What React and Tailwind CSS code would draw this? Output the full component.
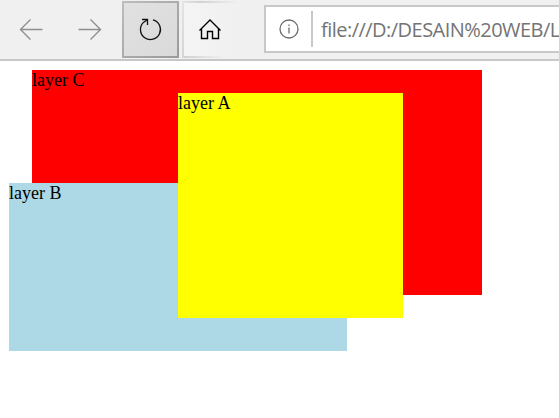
function BackIcon() {
  return (
    <svg width="24" height="25" viewBox="0 0 24 25" fill="none" stroke="#8f8f8f" strokeWidth="1.4">
      <path d="M11.5 2.5 1.5 12.5 11.5 22.5M1.5 12.5H23.5" />
    </svg>
  );
}

function ForwardIcon() {
  return (
    <svg width="24" height="25" viewBox="0 0 24 25" fill="none" stroke="#8f8f8f" strokeWidth="1.4">
      <path d="M12.5 2.5 22.5 12.5 12.5 22.5M0.5 12.5H22.5" />
    </svg>
  );
}

function ReloadIcon() {
  return (
    <svg width="25" height="25" viewBox="0 0 25 25" fill="none" stroke="#111" strokeWidth="1.3">
      <path d="M15 2.9A10 10 0 1 1 5.5 5.4L9.3 2.7" />
      <path d="M4 2.5H9.5V8" />
    </svg>
  );
}

function HomeIcon() {
  return (
    <svg width="24" height="25" viewBox="0 0 24 25" fill="none" stroke="#000" strokeWidth="1.4">
      <path d="M1.5 13.5 12 3 22.5 13.5M3.5 11.8V21.5H9.5V14.5H14.5V21.5H20.5V11.8" />
    </svg>
  );
}

function InfoIcon() {
  return (
    <svg width="20" height="20" viewBox="0 0 20 20" fill="none" stroke="#6c6c6c" strokeWidth="1.3">
      <circle cx="10" cy="10" r="9" />
      <path d="M10 8.5V14.5M10 5.5V7" />
    </svg>
  );
}

function Toolbar() {
  return (
    <header className="flex h-[61px] w-full items-start border-b-2 border-[#c8c8c8] bg-[#f0f0f0]">
      <div className="flex h-[59px] w-[122px] items-center gap-[35px] pl-[19px]">
        <BackIcon />
        <ForwardIcon />
      </div>
      <div className="mt-px h-[57px] w-[57px] bg-linear-to-br from-[#bdbdbd] to-[#999999] p-[2px]">
        <div className="flex h-full w-full items-center justify-center bg-linear-to-br from-[#e1e1e1] to-[#dadada]">
          <ReloadIcon />
        </div>
      </div>
      <div className="mt-px ml-[3px] h-[57px] w-[57px] bg-linear-[105deg,#e6e6e6,#d2d2d2_25%,#f0f0f0_78%] p-[2px]">
        <div className="flex h-full w-full items-center bg-linear-to-r from-[#f4f4f4] to-[#f0f0f0] pl-[14px]">
          <HomeIcon />
        </div>
      </div>
      <div className="mt-[5px] ml-[25px] flex h-[48px] flex-1 items-center overflow-hidden border-y-2 border-l-2 border-[#c8c8c8] bg-white pl-[13px]">
        <div className="shrink-0"><InfoIcon /></div>
        <div className="ml-[12px] h-9 w-[2px] shrink-0 bg-[#c8c8c8]" />
        <span className="mt-[2px] ml-[8px] font-['Open_Sans','Noto_Sans',sans-serif] text-[20px] leading-[30px] tracking-[-0.53px] whitespace-nowrap text-[#747474]">
          file:///D:/DESAIN%20WEB/L
        </span>
      </div>
    </header>
  );
}

export default function App() {
  return (
    <div className="flex h-[418px] w-[559px] flex-col overflow-hidden bg-white">
      <Toolbar />
      <main className="relative flex-1 font-['Liberation_Serif',serif] text-[18px] leading-[21px] text-black">
        <div className="absolute top-[9px] left-[32px] h-[225px] w-[450px] bg-[red]">layer C</div>
        <div className="absolute top-[122px] left-[9px] h-[168px] w-[338px] bg-[lightblue]">layer B</div>
        <div className="absolute top-[32px] left-[178px] h-[225px] w-[225px] bg-[yellow]">layer A</div>
      </main>
    </div>
  );
}
